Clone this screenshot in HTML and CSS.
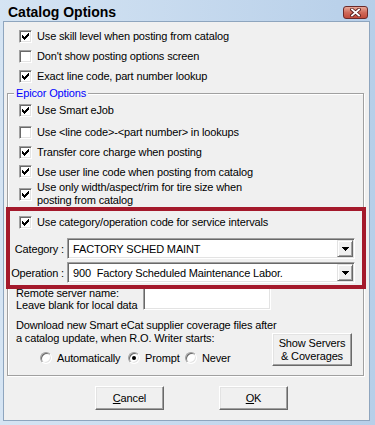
FILE: index.html
```html
<!DOCTYPE html>
<html>
  <head>
    <meta charset="UTF-8" />
    <title>Catalog Options</title>
    <link rel="stylesheet" href="styles.css">
  </head>
  <body>
    <div class="window">
      <div class="titlebar">
        <span class="title">Catalog Options</span>
        <span class="close-btn">
          <svg width="11" height="9" viewBox="0 0 11 9">
            <path d="M2 1.5 L9 7.5 M9 1.5 L2 7.5" stroke="#5a1e1e" stroke-width="3.6" stroke-linecap="square" />
            <path d="M2 1.5 L9 7.5 M9 1.5 L2 7.5" stroke="#ffffff" stroke-width="1.8" stroke-linecap="square" />
          </svg>
        </span>
      </div>
      <div class="client">
        <div class="top-options">
          <div class="check-row">
            <span class="checkbox"><svg class="tick" width="7" height="7" viewBox="0 0 7 7"><path d="M6 0h1v1h-1z M5 1h2v1h-2z M0 2h1v1h-1z M4 2h3v1h-3z M0 3h2v1h-2z M3 3h3v1h-3z M0 4h5v1h-5z M1 5h3v1h-3z M2 6h1v1h-1z" /></svg></span>
            <span>Use skill level when posting from catalog</span>
          </div>
          <div class="check-row">
            <span class="checkbox"></span>
            <span>Don't show posting options screen</span>
          </div>
          <div class="check-row">
            <span class="checkbox"><svg class="tick" width="7" height="7" viewBox="0 0 7 7"><path d="M6 0h1v1h-1z M5 1h2v1h-2z M0 2h1v1h-1z M4 2h3v1h-3z M0 3h2v1h-2z M3 3h3v1h-3z M0 4h5v1h-5z M1 5h3v1h-3z M2 6h1v1h-1z" /></svg></span>
            <span>Exact line code, part number lookup</span>
          </div>
        </div>

        <fieldset class="group">
          <legend>Epicor Options</legend>
          <div class="check-row">
            <span class="checkbox"><svg class="tick" width="7" height="7" viewBox="0 0 7 7"><path d="M6 0h1v1h-1z M5 1h2v1h-2z M0 2h1v1h-1z M4 2h3v1h-3z M0 3h2v1h-2z M3 3h3v1h-3z M0 4h5v1h-5z M1 5h3v1h-3z M2 6h1v1h-1z" /></svg></span>
            <span>Use Smart eJob</span>
          </div>
          <div class="check-row spaced">
            <span class="checkbox"></span>
            <span>Use &lt;line code&gt;-&lt;part number&gt; in lookups</span>
          </div>
          <div class="check-row">
            <span class="checkbox"><svg class="tick" width="7" height="7" viewBox="0 0 7 7"><path d="M6 0h1v1h-1z M5 1h2v1h-2z M0 2h1v1h-1z M4 2h3v1h-3z M0 3h2v1h-2z M3 3h3v1h-3z M0 4h5v1h-5z M1 5h3v1h-3z M2 6h1v1h-1z" /></svg></span>
            <span>Transfer core charge when posting</span>
          </div>
          <div class="check-row short">
            <span class="checkbox"><svg class="tick" width="7" height="7" viewBox="0 0 7 7"><path d="M6 0h1v1h-1z M5 1h2v1h-2z M0 2h1v1h-1z M4 2h3v1h-3z M0 3h2v1h-2z M3 3h3v1h-3z M0 4h5v1h-5z M1 5h3v1h-3z M2 6h1v1h-1z" /></svg></span>
            <span>Use user line code when posting from catalog</span>
          </div>
          <div class="check-row multi">
            <span class="checkbox"><svg class="tick" width="7" height="7" viewBox="0 0 7 7"><path d="M6 0h1v1h-1z M5 1h2v1h-2z M0 2h1v1h-1z M4 2h3v1h-3z M0 3h2v1h-2z M3 3h3v1h-3z M0 4h5v1h-5z M1 5h3v1h-3z M2 6h1v1h-1z" /></svg></span>
            <span>Use only width/aspect/rim for tire size when<br>posting from catalog</span>
          </div>

          <div class="highlight">
            <div class="check-row">
              <span class="checkbox"><svg class="tick" width="7" height="7" viewBox="0 0 7 7"><path d="M6 0h1v1h-1z M5 1h2v1h-2z M0 2h1v1h-1z M4 2h3v1h-3z M0 3h2v1h-2z M3 3h3v1h-3z M0 4h5v1h-5z M1 5h3v1h-3z M2 6h1v1h-1z" /></svg></span>
              <span>Use category/operation code for service intervals</span>
            </div>
            <div class="field-grid">
              <span class="field-label">Category :</span>
              <div class="combo">
                <span class="combo-text">FACTORY SCHED MAINT</span>
                <span class="combo-btn"><svg width="7" height="4" viewBox="0 0 7 4"><path d="M0 0h7v1h-1v1h-1v1h-1v1h-1v-1h-1v-1h-1v-1h-1z" /></svg></span>
              </div>
              <span class="field-label">Operation :</span>
              <div class="combo">
                <span class="combo-text">900  Factory Scheduled Maintenance Labor.</span>
                <span class="combo-btn"><svg width="7" height="4" viewBox="0 0 7 4"><path d="M0 0h7v1h-1v1h-1v1h-1v1h-1v-1h-1v-1h-1v-1h-1z" /></svg></span>
              </div>
            </div>
          </div>

          <div class="server-row">
            <div class="server-label">Remote server name:<br>Leave blank for local data</div>
            <div class="textbox"></div>
          </div>
          <div class="download-text">Download new Smart eCat supplier coverage files after<br>a catalog update, when R.O. Writer starts:</div>
          <div class="download-row">
            <div class="radios">
              <div class="radio-item auto"><span class="radio"></span>Automatically</div>
              <div class="radio-item prompt"><span class="radio checked"></span>Prompt</div>
              <div class="radio-item"><span class="radio"></span>Never</div>
            </div>
            <button class="btn btn-tall">Show Servers<br>&amp; Coverages</button>
          </div>
        </fieldset>

        <div class="dialog-buttons">
          <button class="btn"><u>C</u>ancel</button>
          <button class="btn"><u>O</u>K</button>
        </div>
      </div>
    </div>
  </body>
</html>
```

FILE: styles.css
```css
body {
  margin: 0;
  font-family: "Liberation Sans", Arial, sans-serif;
  font-size: 11px;
  color: #000;
}
.window {
  width: 375px;
  height: 425px;
  box-sizing: border-box;
  padding: 0 5px 4px 3px;
  background: linear-gradient(to right, #d5e4f3, #b7cfe9);
  display: flex;
  flex-direction: column;
}
.titlebar {
  height: 21px;
  display: flex;
  align-items: center;
  padding-left: 5px;
  padding-right: 2px;
}
.title {
  font-size: 14px;
  font-weight: bold;
  flex: 1;
  padding-top: 3px;
}
.close-btn {
  width: 23px;
  height: 11px;
  margin-top: 4px;
  border: 1px solid #6b2a2a;
  border-radius: 3px;
  background: linear-gradient(#e8a999, #d06a5a 50%, #c14a3a);
  display: flex;
  align-items: center;
  justify-content: center;
}
.client {
  flex: 1;
  background: #f0f0f0;
  border: 1px solid #8ea5be;
  letter-spacing: -0.15px;
  display: flex;
  flex-direction: column;
}
.top-options {
  padding-top: 4px;
}
.check-row {
  display: flex;
  align-items: center;
  gap: 5px;
  height: 20px;
  padding-left: 15px;
  white-space: nowrap;
}
.checkbox {
  width: 13px;
  height: 13px;
  box-sizing: border-box;
  flex-shrink: 0;
  background: #fff;
  border: 1px solid;
  border-color: #a0a0a0 #fff #fff #a0a0a0;
  box-shadow: inset 1px 1px 0 #696969, inset -1px -1px 0 #e3e3e3;
  display: flex;
  align-items: center;
  justify-content: center;
}
.tick {
  fill: #000;
  shape-rendering: crispEdges;
}
.group {
  margin: 0 5px 0 3px;
  padding: 0 0 7px 0;
  min-width: 0;
  border: 1px solid #a0a0a0;
  box-shadow: inset 1px 1px 0 #fff, 1px 1px 0 #fff;
}
.group legend {
  margin-left: 6px;
  padding: 0 2px;
  color: #0000ff;
  line-height: 14px;
  background: #f0f0f0;
}
.group .check-row {
  padding-left: 11px;
}
.group .check-row.spaced {
  margin-top: 2px;
}
.group .check-row.short {
  height: 19px;
}
.group .check-row.multi {
  height: 26px;
  line-height: 13px;
}
.highlight {
  position: relative;
  margin: 0 -3px 0 -2px;
  border: 4px solid #a4192b;
  padding: 1px 7px 2px 0;
}
.group .highlight .check-row {
  padding-left: 9px;
}
.field-grid {
  display: grid;
  grid-template-columns: 54px 1fr;
  column-gap: 3px;
  row-gap: 3px;
  margin-top: 6px;
  align-items: center;
}
.field-label {
  text-align: right;
  white-space: nowrap;
}
.combo {
  height: 21px;
  box-sizing: border-box;
  background: #fff;
  border: 1px solid;
  border-color: #a0a0a0 #fff #fff #a0a0a0;
  box-shadow: inset 1px 1px 0 #696969, inset -1px -1px 0 #e3e3e3;
  padding: 1px;
  display: flex;
  align-items: center;
}
.combo-text {
  flex: 1;
  padding-left: 4px;
  white-space: pre;
}
.combo-btn {
  width: 16px;
  height: 17px;
  box-sizing: border-box;
  background: #f0f0f0;
  border: 1px solid;
  border-color: #e3e3e3 #696969 #696969 #e3e3e3;
  box-shadow: inset 1px 1px 0 #fff, inset -1px -1px 0 #a0a0a0;
  display: flex;
  align-items: center;
  justify-content: center;
}
.combo-btn svg {
  fill: #000;
  shape-rendering: crispEdges;
}
.server-row {
  display: flex;
  align-items: flex-start;
  margin-top: -3px;
  padding-left: 8px;
}
.server-label {
  width: 127px;
  line-height: 12px;
  padding-top: 1px;
  white-space: nowrap;
}
.textbox {
  width: 128px;
  height: 23px;
  margin-top: 1px;
  box-sizing: border-box;
  background: #fff;
  border: 1px solid;
  border-color: #a0a0a0 #fff #fff #a0a0a0;
  box-shadow: inset 1px 1px 0 #696969, inset -1px -1px 0 #e3e3e3;
}
.download-text {
  margin-top: 8px;
  padding-left: 8px;
  line-height: 13px;
  white-space: nowrap;
}
.download-row {
  display: flex;
  align-items: flex-start;
  padding-left: 32px;
}
.radios {
  display: flex;
  align-items: center;
  height: 20px;
  margin-top: 3px;
}
.radio-item {
  display: flex;
  align-items: center;
  gap: 5px;
}
.radio-item.auto {
  width: 88px;
}
.radio-item.prompt {
  width: 57px;
}
.radio {
  width: 12px;
  height: 12px;
  box-sizing: border-box;
  border-radius: 50%;
  background: #fff;
  border: 1px solid;
  border-color: #a0a0a0 #fff #fff #a0a0a0;
  box-shadow: inset 1px 1px 0 #696969, inset -1px -1px 0 #e3e3e3;
  display: flex;
  align-items: center;
  justify-content: center;
}
.radio.checked::after {
  content: "";
  width: 4px;
  height: 4px;
  border-radius: 50%;
  background: #000;
}
.btn {
  font: inherit;
  letter-spacing: inherit;
  color: #000;
  background: #f0f0f0;
  border: 1px solid;
  border-color: #fff #696969 #696969 #fff;
  box-shadow: inset -1px -1px 0 #a0a0a0, inset 1px 1px 0 #e3e3e3;
  border-radius: 0;
  padding: 0;
  width: 69px;
  height: 24px;
}
.btn-tall {
  width: 80px;
  height: 33px;
  margin-left: auto;
  margin-right: 11px;
  margin-top: -12px;
  line-height: 13px;
}
.dialog-buttons {
  display: flex;
  gap: 55px;
  padding-left: 91px;
  margin-top: 10px;
}
```
